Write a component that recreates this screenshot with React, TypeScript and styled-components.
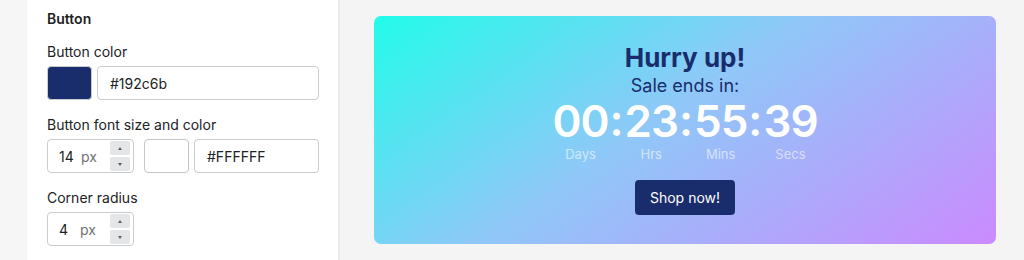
import React from 'react';
import styled, { createGlobalStyle } from 'styled-components';

const Global = createGlobalStyle`
  html, body {
    margin: 0;
    padding: 0;
    background: #f4f4f5;
    font-family: Inter, "Liberation Sans", Arial, sans-serif;
  }
`;

const units = [
  { value: '00', label: 'Days' },
  { value: '23', label: 'Hrs' },
  { value: '55', label: 'Mins' },
  { value: '39', label: 'Secs' },
];

const App = () => {
  return (
    <Page>
      <Global />
      <Gutter />
      <Panel>
        <Heading>Button</Heading>

        <Label>Button color</Label>
        <Row>
          <Swatch color="#192c6b" />
          <TextField wide="222px">#192c6b</TextField>
        </Row>

        <Label>Button font size and color</Label>
        <Row>
          <NumberField>
            <Value>14</Value>
            <Unit>px</Unit>
            <Spinner>
              <Step><Arrow up /></Step>
              <Step><Arrow /></Step>
            </Spinner>
          </NumberField>
          <Swatch color="#ffffff" bordered spaced />
          <TextField wide="125px">#FFFFFF</TextField>
        </Row>

        <Label>Corner radius</Label>
        <Row>
          <NumberField>
            <Value small>4</Value>
            <Unit>px</Unit>
            <Spinner>
              <Step><Arrow up /></Step>
              <Step><Arrow /></Step>
            </Spinner>
          </NumberField>
        </Row>
      </Panel>

      <Preview>
        <Card>
          <Title>Hurry up!</Title>
          <Sub>Sale ends in:</Sub>
          <Timer>
            {units.map((u, i) => (
              <React.Fragment key={u.label}>
                {i > 0 && <Colon>:</Colon>}
                <UnitCol>
                  <Digits>{u.value}</Digits>
                  <UnitLabel>{u.label}</UnitLabel>
                </UnitCol>
              </React.Fragment>
            ))}
          </Timer>
          <ShopButton>Shop now!</ShopButton>
        </Card>
      </Preview>
    </Page>
  );
};

export default App;

const Page = styled.div`
  display: flex;
  width: 1024px;
  height: 260px;
  overflow: hidden;
  background: #f4f4f5;
`;

const Gutter = styled.div`
  width: 27px;
  flex-shrink: 0;
  background: #f6f6f7;
`;

const Panel = styled.div`
  width: 291px;
  flex-shrink: 0;
  background: #ffffff;
  border-right: 2px solid #ebebeb;
  padding: 10px 0 0 20px;
  color: #202223;
`;

const Heading = styled.div`
  font-size: 14px;
  font-weight: 600;
  line-height: 17px;
  margin-bottom: 16px;
`;

const Label = styled.div`
  font-size: 14px;
  line-height: 17px;
  margin-bottom: 6px;
`;

const Row = styled.div`
  display: flex;
  align-items: center;
  margin-bottom: 16px;
`;

const Swatch = styled.div<{ color: string; bordered?: boolean; spaced?: boolean }>`
  width: 45px;
  height: 34px;
  box-sizing: border-box;
  border-radius: 4px;
  background: ${(p) => p.color};
  border: 1px solid ${(p) => (p.bordered ? '#c4c7ca' : '#c9cccf')};
  margin-left: ${(p) => (p.spaced ? '10px' : '0')};
  margin-right: 5px;
`;

const TextField = styled.div<{ wide: string }>`
  width: ${(p) => p.wide};
  height: 34px;
  box-sizing: border-box;
  border: 1px solid #c9cccf;
  border-radius: 4px;
  padding: 0 12px;
  display: flex;
  align-items: center;
  font-size: 14px;
  color: #202223;
`;

const NumberField = styled.div`
  width: 87px;
  height: 34px;
  box-sizing: border-box;
  border: 1px solid #c9cccf;
  border-radius: 4px;
  display: flex;
  align-items: center;
  padding: 0 2px 0 11px;
  font-size: 14px;
`;

const Value = styled.span<{ small?: boolean }>`
  color: #202223;
  width: ${(p) => (p.small ? '21px' : '22px')};
`;

const Unit = styled.span`
  color: #6d7175;
  flex: 1;
`;

const Spinner = styled.div`
  display: flex;
  flex-direction: column;
  gap: 2px;
  margin-right: 1px;
`;

const Step = styled.div`
  width: 20px;
  height: 14px;
  background: #e4e5e7;
  border-radius: 2px;
  display: flex;
  align-items: center;
  justify-content: center;
`;

const Arrow = styled.div<{ up?: boolean }>`
  width: 0;
  height: 0;
  border-left: 2.5px solid transparent;
  border-right: 2.5px solid transparent;
  ${(p) => (p.up ? 'border-bottom: 3px solid #5c5f62;' : 'border-top: 3px solid #5c5f62;')}
`;

const Preview = styled.div`
  flex: 1;
  padding: 16px 28px 16px 34px;
  display: flex;
`;

const Card = styled.div`
  flex: 1;
  height: 228px;
  border-radius: 7px;
  background: linear-gradient(145deg, #22fcea 0%, #8fc8f8 45%, #cb8afe 100%);
  display: flex;
  flex-direction: column;
  align-items: center;
  box-sizing: border-box;
  padding-top: 27px;
`;

const Title = styled.div`
  font-size: 26px;
  font-weight: 700;
  line-height: 30px;
  color: #192c6b;
`;

const Sub = styled.div`
  font-size: 18px;
  line-height: 24px;
  color: #192c6b;
  margin-top: 1px;
`;

const Timer = styled.div`
  display: flex;
  align-items: flex-start;
  color: #ffffff;
  margin-top: 1px;
`;

const UnitCol = styled.div`
  display: flex;
  flex-direction: column;
  align-items: center;
`;

const Digits = styled.div`
  font-size: 44px;
  font-weight: 600;
  line-height: 44px;
  letter-spacing: -1px;
`;

const Colon = styled.div`
  font-size: 44px;
  font-weight: 600;
  line-height: 42px;
  padding: 0 1px;
`;

const UnitLabel = styled.div`
  font-size: 13px;
  line-height: 16px;
  color: rgba(255, 255, 255, 0.6);
  margin-top: 3px;
`;

const ShopButton = styled.div`
  margin-top: 18px;
  background: #192c6b;
  color: #ffffff;
  font-size: 14px;
  border-radius: 4px;
  height: 35px;
  padding: 0 15px;
  display: flex;
  align-items: center;
`;
